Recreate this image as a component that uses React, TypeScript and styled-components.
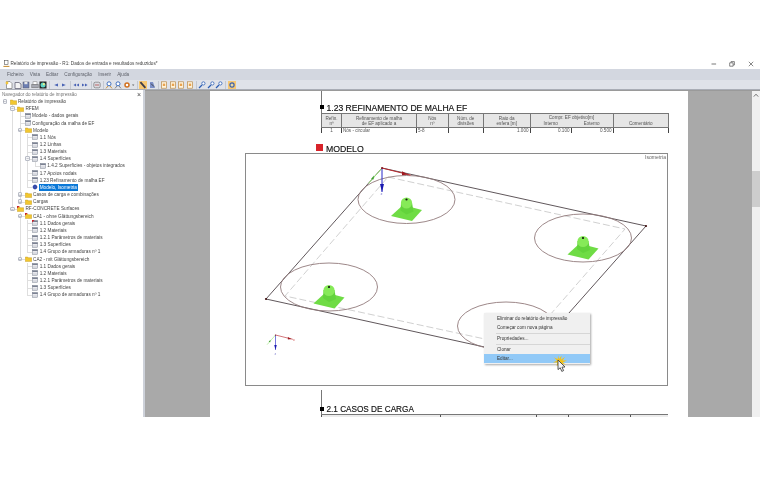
import React from 'react';
import styled, { createGlobalStyle } from 'styled-components';

const GlobalStyle = createGlobalStyle`
  html, body {
    margin: 0;
    padding: 0;
    background: #fff;
    font-family: 'Liberation Sans', Arial, sans-serif;
  }
`;

type TreeItem = {
  label: string;
  depth: number;
  icon: 'folder' | 'flagged' | 'table' | 'flaggedTable' | 'view';
  open?: boolean;
  selected?: boolean;
};

const TREE: TreeItem[] = [
  { label: 'Relatório de impressão', depth: 0, icon: 'folder', open: true },
  { label: 'RFEM', depth: 1, icon: 'folder', open: true },
  { label: 'Modelo - dados gerais', depth: 2, icon: 'table' },
  { label: 'Configuração da malha de EF', depth: 2, icon: 'table' },
  { label: 'Modelo', depth: 2, icon: 'folder', open: true },
  { label: '1.1 Nós', depth: 3, icon: 'table' },
  { label: '1.2 Linhas', depth: 3, icon: 'table' },
  { label: '1.3 Materiais', depth: 3, icon: 'table' },
  { label: '1.4 Superfícies', depth: 3, icon: 'table', open: true },
  { label: '1.4.2 Superfícies - objetos integrados', depth: 4, icon: 'table' },
  { label: '1.7 Apoios nodais', depth: 3, icon: 'table' },
  { label: '1.23 Refinamento de malha EF', depth: 3, icon: 'table' },
  { label: 'Modelo, Isometria', depth: 3, icon: 'view', selected: true },
  { label: 'Casos de carga e combinações', depth: 2, icon: 'folder', open: false },
  { label: 'Cargas', depth: 2, icon: 'folder', open: false },
  { label: 'RF-CONCRETE Surfaces', depth: 1, icon: 'flagged', open: true },
  { label: 'CA1 - ohne Glättungsbereich', depth: 2, icon: 'flagged', open: true },
  { label: '1.1 Dados gerais', depth: 3, icon: 'flaggedTable' },
  { label: '1.2 Materiais', depth: 3, icon: 'table' },
  { label: '1.2.1 Parâmetros de materiais', depth: 3, icon: 'table' },
  { label: '1.3 Superfícies', depth: 3, icon: 'table' },
  { label: '1.4 Grupo de armaduras nº 1', depth: 3, icon: 'table' },
  { label: 'CA2 - mit Glättungsbereich', depth: 2, icon: 'folder', open: true },
  { label: '1.1 Dados gerais', depth: 3, icon: 'table' },
  { label: '1.2 Materiais', depth: 3, icon: 'table' },
  { label: '1.2.1 Parâmetros de materiais', depth: 3, icon: 'table' },
  { label: '1.3 Superfícies', depth: 3, icon: 'table' },
  { label: '1.4 Grupo de armaduras nº 1', depth: 3, icon: 'table' },
];

const MENU = ['Ficheiro', 'Vista', 'Editar', 'Configuração', 'Inserir', 'Ajuda'];

const TOOL_GROUPS: string[][] = [
  ['doc', 'open', 'save', 'print', 'colour'],
  ['prev', 'next'],
  ['first', 'last'],
  ['refresh'],
  ['zoomIn', 'zoomOut', 'gear', 'caret'],
  ['brush', 'paint'],
  ['page', 'page', 'page', 'page'],
  ['blue', 'blue', 'blue'],
  ['settings'],
];

// does the guide line of this depth carry on below row i?
const guideContinues = (i: number, depth: number) => {
  for (let j = i + 1; j < TREE.length; j++) {
    if (TREE[j].depth < depth) return false;
    if (TREE[j].depth === depth) return true;
  }
  return false;
};

const ToolIcon: React.FC<{ kind: string }> = ({ kind }) => {
  if (kind === 'caret') {
    return (
      <svg width="4" height="8" viewBox="0 0 4 8">
        <path d="M1 3.4h2.4L2.2 5z" fill="#666" />
      </svg>
    );
  }
  const shapes: Record<string, React.ReactNode> = {
    doc: (
      <>
        <path d="M1.5 .5h3.5l2 2v5h-5.5z" fill="#fff" stroke="#777" strokeWidth=".7" />
        <circle cx="2" cy="2" r="1.4" fill="#f2c53a" />
      </>
    ),
    open: <path d="M1 1.5h4l2 1.5v4.5h-6z" fill="#f4f4f4" stroke="#667" strokeWidth=".8" />,
    save: (
      <>
        <rect x="1" y="1" width="6" height="6" fill="#6d7fb3" stroke="#556" strokeWidth=".5" />
        <rect x="2.4" y="1" width="3" height="2.2" fill="#e8e8e8" />
      </>
    ),
    print: (
      <>
        <rect x="2" y=".8" width="4" height="3" fill="#fff" stroke="#777" strokeWidth=".5" />
        <rect x=".8" y="3.4" width="6.4" height="3.4" fill="#a7a9b2" stroke="#666" strokeWidth=".5" />
      </>
    ),
    colour: (
      <>
        <rect x=".5" y=".5" width="7" height="7" fill="#222" />
        <circle cx="4" cy="4" r="2.5" fill="#5fd6c8" />
        <circle cx="4.8" cy="3.2" r="1.1" fill="#e6f28a" />
      </>
    ),
    prev: <path d="M6 2.4v3.2L2.2 4z" fill="#4a63b5" />,
    next: <path d="M2 2.4v3.2L5.8 4z" fill="#4a63b5" />,
    first: <path d="M4 2.4v3.2L1.4 4zM7 2.4v3.2L4.4 4z" fill="#4a63b5" />,
    last: <path d="M1 2.4v3.2L3.6 4zM4 2.4v3.2L6.6 4z" fill="#4a63b5" />,
    refresh: (
      <>
        <rect x=".8" y="1.2" width="6.4" height="5.6" rx="1.6" fill="#dcdce2" stroke="#777" strokeWidth=".7" />
        <path d="M2 4h4" stroke="#a33" strokeWidth=".7" />
      </>
    ),
    zoomIn: (
      <>
        <circle cx="4" cy="2.8" r="2" fill="#fff" stroke="#2e62b8" strokeWidth=".9" />
        <path d="M1 7.4l2-2.4M7 7.4l-2-2.4" stroke="#c58a2a" strokeWidth=".9" />
      </>
    ),
    zoomOut: (
      <>
        <circle cx="4" cy="2.8" r="2" fill="#fff" stroke="#2e62b8" strokeWidth=".9" />
        <path d="M1 7.4l2-2.4M7 7.4l-2-2.4" stroke="#777" strokeWidth=".9" />
      </>
    ),
    gear: <circle cx="4" cy="4" r="2" fill="#fff" stroke="#d2701e" strokeWidth="1.5" />,
    brush: (
      <>
        <rect width="8" height="8" fill="#f7c873" />
        <path d="M1.4 1.2l5 5.6" stroke="#3b3b4a" strokeWidth="1.8" />
      </>
    ),
    paint: (
      <>
        <path d="M2 1h3l2 6h-5z" fill="#7d90c8" />
        <path d="M3 2.6l3 3" stroke="#333" strokeWidth=".8" />
      </>
    ),
    page: (
      <>
        <rect x="1.4" y=".8" width="5.2" height="6.4" fill="#fff4dc" stroke="#b98a4a" strokeWidth=".7" />
        <rect x="2.8" y="2.6" width="2.4" height="2.4" fill="#e9a24e" />
      </>
    ),
    blue: (
      <>
        <circle cx="5.4" cy="2.4" r="1.6" fill="#fff" stroke="#2b5db4" strokeWidth=".8" />
        <path d="M1 7l3-3" stroke="#2b5db4" strokeWidth="1.2" />
      </>
    ),
    settings: (
      <>
        <rect width="8" height="8" fill="#f7c873" />
        <circle cx="4" cy="4" r="2.1" fill="#e8d9a0" stroke="#3f62ad" strokeWidth="1.2" />
      </>
    ),
  };
  return (
    <svg width="8" height="8" viewBox="0 0 8 8">
      {shapes[kind]}
    </svg>
  );
};

const NodeIcon: React.FC<{ kind: TreeItem['icon'] }> = ({ kind }) => {
  if (kind === 'view') {
    return (
      <svg width="6" height="6" viewBox="0 0 6 6">
        <circle cx="3" cy="3" r="2.2" fill="#24389c" />
        <path d="M3 0v6M0 3h6" stroke="#5a6cc4" strokeWidth=".5" />
      </svg>
    );
  }
  if (kind === 'table' || kind === 'flaggedTable') {
    return (
      <svg width="6" height="6" viewBox="0 0 6 6">
        <rect x=".3" y=".6" width="5.4" height="5" fill="#f4f5f8" stroke="#7b8190" strokeWidth=".5" />
        <rect x=".3" y=".6" width="5.4" height="1.3" fill="#6f7688" />
        <path d="M.5 3.2h5M.5 4.4h5" stroke="#a2a7b4" strokeWidth=".4" />
        {kind === 'flaggedTable' && <path d="M0 0h2.6L0 2.4z" fill="#c8252c" />}
      </svg>
    );
  }
  return (
    <svg width="7" height="6" viewBox="0 0 7 6">
      <path d="M.3 1h2.4l.6.7h3.4v3.9H.3z" fill="#f2c72f" stroke="#b8901c" strokeWidth=".4" />
      {kind === 'flagged' && <path d="M0 0h2.8L0 2.6z" fill="#c8252c" />}
    </svg>
  );
};

const Support: React.FC<{ cx: number; cy: number }> = ({ cx, cy }) => (
  <g transform={`translate(${cx} ${cy})`}>
    <path d="M-15.5 16.5L-3.5 5.5L15.5 10.5L5.5 21.5Z" fill="#6fdc45" />
    <path d="M-6 11L-5.5 3H5.5L7 12L0 15Z" fill="#63d33c" />
    <circle cx="0" cy="3.5" r="5.6" fill="#86ea58" />
    <circle cx="0" cy="0" r="1.1" fill="#111" />
  </g>
);

const Axes: React.FC<{ x: number; y: number; scale?: number }> = ({ x, y, scale = 1 }) => (
  <g transform={`translate(${x} ${y}) scale(${scale})`}>
    <path d="M0 0L-13.5 15.5" stroke="#9be77a" strokeWidth="1" />
    <path d="M-8 7.5L-11 11L-8.5 11.5Z" fill="#3c9e2c" />
    <path d="M0 0L28 7" stroke="#b8262c" strokeWidth="1" />
    <path d="M20 3.2L26 6.6L20 7.2Z" fill="#a01a20" />
    <path d="M0 0V24" stroke="#2626c8" strokeWidth="1" />
    <path d="M-2 16H2L0 24Z" fill="#1a1ab0" />
    <circle cx="0" cy="0" r="1" fill="#8a1a1a" />
  </g>
);

const ModelDrawing: React.FC = () => (
  <svg width="421" height="231" viewBox="246 154 421 231">
    <path
      d="M388 177L625 229L522 347L285 296Z"
      fill="none"
      stroke="#c4c4c4"
      strokeWidth=".8"
      strokeDasharray="7 3"
    />
    <path d="M382 168L646 226L530 357L266 299Z" fill="none" stroke="#4e4448" strokeWidth=".9" />
    {[
      [406.5, 199.5],
      [329, 287],
      [583, 238],
      [506, 326],
    ].map(([cx, cy]) => (
      <ellipse key={cx} cx={cx} cy={cy} rx="48.5" ry="24" fill="none" stroke="#927a7c" strokeWidth=".9" />
    ))}
    <Support cx={406.5} cy={199.5} />
    <Support cx={329} cy={287} />
    <Support cx={583} cy={238} />
    <circle cx="266" cy="299" r="1.1" fill="#401010" />
    <circle cx="646" cy="226" r="1.1" fill="#401010" />
    <Axes x={382} y={168} />
    <Axes x={275.5} y={335} scale={0.62} />
    <text x="409" y="176" fontSize="4" fill="#c66">x</text>
    <text x="380.5" y="195" fontSize="4" fill="#77c">z</text>
    <text x="293" y="341" fontSize="3.4" fill="#c44">x</text>
    <text x="274.4" y="355" fontSize="3.4" fill="#77c">z</text>
  </svg>
);

const App: React.FC = () => (
  <>
    <GlobalStyle />
    <Screen>
      <TitleBar>
        <TitleLeft>
          <svg width="7" height="7" viewBox="0 0 7 7">
            <rect x="1.4" y=".6" width="3.6" height="4" fill="#fff" stroke="#555" strokeWidth=".6" />
            <path d="M.4 6.4h6" stroke="#c58a2a" strokeWidth="1" />
          </svg>
          <span>Relatório de impressão - R1: Dados de entrada e resultados reduzidos*</span>
        </TitleLeft>
        <WindowButtons>
          <svg width="6" height="6" viewBox="0 0 6 6">
            <path d="M.5 3h4.6" stroke="#555" strokeWidth=".8" />
          </svg>
          <svg width="6" height="6" viewBox="0 0 6 6">
            <path d="M.7 1.8h3.4v3.4H.7zM2 1.6V.6h3.4v3.4H4.2" fill="none" stroke="#555" strokeWidth=".7" />
          </svg>
          <svg width="6" height="6" viewBox="0 0 6 6">
            <path d="M.8.8l4.4 4.4M5.2.8L.8 5.2" stroke="#555" strokeWidth=".7" />
          </svg>
        </WindowButtons>
      </TitleBar>
      <MenuBar>
        {MENU.map((item) => (
          <MenuItem key={item}>{item}</MenuItem>
        ))}
      </MenuBar>
      <ToolBar>
        {TOOL_GROUPS.map((group, g) => (
          <ToolGroup key={g}>
            {group.map((kind, k) => (
              <ToolIcon key={k} kind={kind} />
            ))}
          </ToolGroup>
        ))}
      </ToolBar>
      <Body>
        <Navigator>
          <NavigatorHeader>
            <span>Navegador do relatório de impressão</span>
            <span>×</span>
          </NavigatorHeader>
          <div>
            {TREE.map((item, i) => (
              <TreeRow key={i} $depth={item.depth}>
                {Array.from({ length: item.depth }).map((_, d) => {
                  const depth = d + 1;
                  const own = depth === item.depth;
                  const carries = guideContinues(i, depth);
                  return (
                    (own || carries) && <Guide key={d} $depth={depth} $short={!carries} />
                  );
                })}
                {item.depth > 0 && <Stub $depth={item.depth} />}
                {item.open !== undefined && (
                  <Expander $depth={item.depth}>{item.open ? '−' : '+'}</Expander>
                )}
                <NodeIcon kind={item.icon} />
                <TreeLabel $selected={item.selected}>{item.label}</TreeLabel>
              </TreeRow>
            ))}
          </div>
        </Navigator>
        <Workspace>
          <Page>
            <SectionHead $size={8.6}>1.23 REFINAMENTO DE MALHA EF</SectionHead>
            <RefineTable>
              <colgroup>
                {[20, 75, 31.5, 35.5, 46.5, 41, 42, 55.5].map((w, i) => (
                  <col key={i} style={{ width: w }} />
                ))}
              </colgroup>
              <thead>
                <tr>
                  <th rowSpan={2}>Refin.<br />nº</th>
                  <th rowSpan={2}>Refinamento de malha<br />de EF aplicado a</th>
                  <th rowSpan={2}>Nós<br />nº</th>
                  <th rowSpan={2}>Núm. de<br />divisões</th>
                  <th rowSpan={2}>Raio da<br />esfera [m]</th>
                  <GroupHead colSpan={2}>Compr. EF objetivo[m]</GroupHead>
                  <th rowSpan={2}><br />Comentário</th>
                </tr>
                <tr>
                  <SubHead $side="left">Interno</SubHead>
                  <SubHead $side="right">Externo</SubHead>
                </tr>
              </thead>
              <tbody>
                <tr>
                  <BodyCell $align="center">1</BodyCell>
                  <BodyCell>Nós - circular</BodyCell>
                  <BodyCell>5-8</BodyCell>
                  <BodyCell />
                  <BodyCell $align="right">1.000</BodyCell>
                  <BodyCell $align="right">0.100</BodyCell>
                  <BodyCell $align="right">0.500</BodyCell>
                  <BodyCell />
                </tr>
              </tbody>
            </RefineTable>
            <ModelHead>MODELO</ModelHead>
            <Figure>
              <FigureCaption>Isometria</FigureCaption>
              <ModelDrawing />
            </Figure>
            <SectionHead $second $size={8.2}>2.1 CASOS DE CARGA</SectionHead>
            <LoadTable>
              {[119, 96, 32, 62, 38].map((w, i) => (
                <LoadColumn key={i} $width={w} />
              ))}
            </LoadTable>
            <ContextMenu>
              <ContextItem>Eliminar do relatório de impressão</ContextItem>
              <ContextItem>Começar com nova página</ContextItem>
              <ContextSeparator />
              <ContextItem>Propriedades...</ContextItem>
              <ContextSeparator />
              <ContextItem>Clonar</ContextItem>
              <ContextItem $active>Editar...</ContextItem>
            </ContextMenu>
            <Pointer width="18" height="20" viewBox="0 0 18 20">
              <path
                d="M7 0L8 4L10.5 .6L10 4.6L14 2L11.5 5.6L16 5.4L11.6 7.4L15 9.6L10.6 8.8L11 12L8.4 9L5.6 11L6.4 7.6L2 7.6L6 5.6L3 2.4L6.8 4Z"
                fill="#f1c21b"
              />
              <path
                d="M7 5L7 14.6L9.2 12.8L10.8 16.4L12.6 15.6L11 12.2L14 12Z"
                fill="#f4f4f4"
                stroke="#333"
                strokeWidth=".8"
              />
            </Pointer>
          </Page>
          <Scrollbar>
            <ScrollArrow>
              <svg width="6" height="5" viewBox="0 0 6 5">
                <path d="M.8 3.6L3 1.2L5.2 3.6" fill="none" stroke="#555" strokeWidth=".8" />
              </svg>
            </ScrollArrow>
            <ScrollThumb />
          </Scrollbar>
        </Workspace>
      </Body>
    </Screen>
  </>
);

const Screen = styled.div`
  width: 760px;
  height: 477px;
  padding-top: 57px;
  box-sizing: border-box;
  overflow: hidden;
  background: #fff;
  color: #444;
  filter: blur(0.35px);
`;
const TitleBar = styled.div`
  height: 12px;
  padding: 1px 6px 0 3px;
  box-sizing: border-box;
  display: flex;
  align-items: center;
  justify-content: space-between;
  font-size: 4.65px;
`;
const TitleLeft = styled.div`
  display: flex;
  align-items: center;
  gap: 0.5px;
`;
const WindowButtons = styled.div`
  display: flex;
  gap: 12px;
  svg:last-child {
    margin-left: 1px;
  }
`;
const MenuBar = styled.div`
  height: 11px;
  display: flex;
  align-items: center;
  gap: 6px;
  padding-left: 7px;
  background: #d3d7e0;
  font-size: 4.7px;
  color: #5c5f68;
`;
const MenuItem = styled.span``;
const ToolBar = styled.div`
  height: 10px;
  display: flex;
  align-items: center;
  padding-left: 3.5px;
  background: #dfe2e9;
  border-bottom: 1px solid #a9adb6;
  box-sizing: border-box;
`;
const ToolGroup = styled.div`
  display: flex;
  gap: 0.6px;
  padding: 0 1.6px;
  border-right: 1px solid #c4c8d1;
  height: 8px;
  &:last-child {
    border-right: none;
  }
`;
const Body = styled.div`
  height: 327px;
  display: flex;
  overflow: hidden;
`;
const Navigator = styled.div`
  width: 143px;
  border-left: 1px solid #d2d2d2;
  border-right: 2px solid #cdd1d9;
  box-sizing: content-box;
  margin-left: -1px;
  background: #fff;
`;
const NavigatorHeader = styled.div`
  height: 8px;
  display: flex;
  align-items: center;
  justify-content: space-between;
  padding: 0 2px;
  font-size: 4.55px;
  color: #777;
  span:last-child {
    font-size: 7px;
    color: #444;
  }
`;
const TreeRow = styled.div<{ $depth: number }>`
  position: relative;
  height: 7.17px;
  display: flex;
  align-items: center;
  gap: 0.6px;
  padding-left: ${(p) => 9.5 + p.$depth * 7.6}px;
  font-size: 4.7px;
  white-space: nowrap;
`;
const Guide = styled.i<{ $depth: number; $short: boolean }>`
  position: absolute;
  left: ${(p) => 4.5 + p.$depth * 7.6}px;
  top: 0;
  bottom: ${(p) => (p.$short ? '50%' : '0')};
  width: 1.2px;
  background: #dedede;
`;
const Stub = styled.i<{ $depth: number }>`
  position: absolute;
  left: ${(p) => 4.5 + p.$depth * 7.6}px;
  top: 50%;
  width: 5px;
  height: 1px;
  background: #dedede;
`;
const Expander = styled.b<{ $depth: number }>`
  position: absolute;
  left: ${(p) => 2.6 + p.$depth * 7.6}px;
  top: 1.2px;
  width: 4.6px;
  height: 4.6px;
  border: 0.5px solid #b8bcc6;
  box-sizing: border-box;
  border-radius: 1px;
  background: #f4f5f7;
  font-size: 4.4px;
  font-weight: normal;
  line-height: 3.6px;
  text-align: center;
  color: #667;
`;
const TreeLabel = styled.span<{ $selected?: boolean }>`
  padding: 0 0.8px;
  line-height: 7px;
  background: ${(p) => (p.$selected ? '#0a78d7' : 'transparent')};
  color: ${(p) => (p.$selected ? '#fff' : '#444')};
`;
const Workspace = styled.div`
  flex: 1;
  display: flex;
  background: #a9a9a9;
  border-top: 1px solid #9a9a9a;
  box-sizing: border-box;
  padding-left: 65px;
  justify-content: space-between;
`;
const Page = styled.div`
  position: relative;
  width: 478px;
  background: #fff;
  padding: 0 20px 0 35px;
  box-sizing: border-box;
`;
const SectionHead = styled.div<{ $second?: boolean; $size: number }>`
  position: relative;
  margin: ${(p) => (p.$second ? '4px 0 -1px 76px' : '0 0 0 76px')};
  padding: ${(p) => (p.$second ? '15px' : '12px')} 0 0 4.5px;
  border-left: 1px solid #777;
  font-size: ${(p) => p.$size}px;
  line-height: 10px;
  height: 10px;
  color: #111;
  -webkit-text-stroke: 0.15px #111;
  &::before {
    content: '';
    position: absolute;
    left: -2.5px;
    bottom: 4px;
    width: 4px;
    height: 4px;
    background: #000;
  }
`;
const RefineTable = styled.table`
  margin: 0 0 0 76px;
  width: 347px;
  height: 19px;
  table-layout: fixed;
  border-collapse: collapse;
  font-size: 4.6px;
  color: #555;
  th {
    background: #e6e6e6;
    border: 1px solid #777;
    font-weight: normal;
    line-height: 5px;
    padding: 0;
    height: 6.5px;
  }
`;
const GroupHead = styled.th`
  && {
    border-bottom: none;
  }
`;
const SubHead = styled.th<{ $side: 'left' | 'right' }>`
  && {
    border-top: none;
    ${(p) => (p.$side === 'left' ? 'border-right: none;' : 'border-left: none;')}
  }
`;
const BodyCell = styled.td<{ $align?: string }>`
  border-left: 1px solid #444;
  border-right: 1px solid #444;
  padding: 0 1px;
  line-height: 5px;
  text-align: ${(p) => p.$align || 'left'};
`;
const ModelHead = styled.div`
  position: relative;
  margin: 12px 0 0 81px;
  font-size: 8.7px;
  line-height: 8px;
  height: 8px;
  color: #111;
  -webkit-text-stroke: 0.15px #111;
  &::before {
    content: '';
    position: absolute;
    left: -10px;
    top: -1px;
    width: 7px;
    height: 7px;
    background: #d8232a;
  }
`;
const Figure = styled.div`
  position: relative;
  width: 423px;
  height: 233px;
  box-sizing: border-box;
  border: 1px solid #8a8a8a;
  background: #fff;
`;
const FigureCaption = styled.span`
  position: absolute;
  right: 1px;
  top: 0;
  font-size: 5.1px;
  color: #666;
`;
const LoadTable = styled.div`
  display: flex;
  margin: 0 0 0 76px;
  height: 8px;
  background: #ececec;
  border-top: 1px solid #777;
`;
const LoadColumn = styled.i<{ $width: number }>`
  width: ${(p) => p.$width}px;
  border-left: 1px solid #555;
  box-sizing: border-box;
`;
const ContextMenu = styled.div`
  position: absolute;
  left: 274px;
  top: 222px;
  width: 106px;
  height: 51px;
  box-sizing: border-box;
  padding-top: 1px;
  background: #f0f0f0;
  box-shadow: 1px 1px 2px rgba(0, 0, 0, 0.35);
  font-size: 4.65px;
  color: #333;
`;
const ContextItem = styled.div<{ $active?: boolean }>`
  height: 9px;
  line-height: 9px;
  padding-left: 13px;
  background: ${(p) => (p.$active ? '#91c9f7' : 'transparent')};
`;
const ContextSeparator = styled.div`
  height: 0.6px;
  margin: 0.7px 0 0.7px 12px;
  background: #d6d6d6;
`;
const Pointer = styled.svg`
  position: absolute;
  left: 341px;
  top: 264px;
`;
const Scrollbar = styled.div`
  width: 8px;
  background: #f0f0f0;
`;
const ScrollArrow = styled.div`
  height: 9px;
  display: flex;
  align-items: center;
  justify-content: center;
`;
const ScrollThumb = styled.div`
  height: 36px;
  margin-top: 71px;
  background: #cdcdcd;
`;

export default App;
